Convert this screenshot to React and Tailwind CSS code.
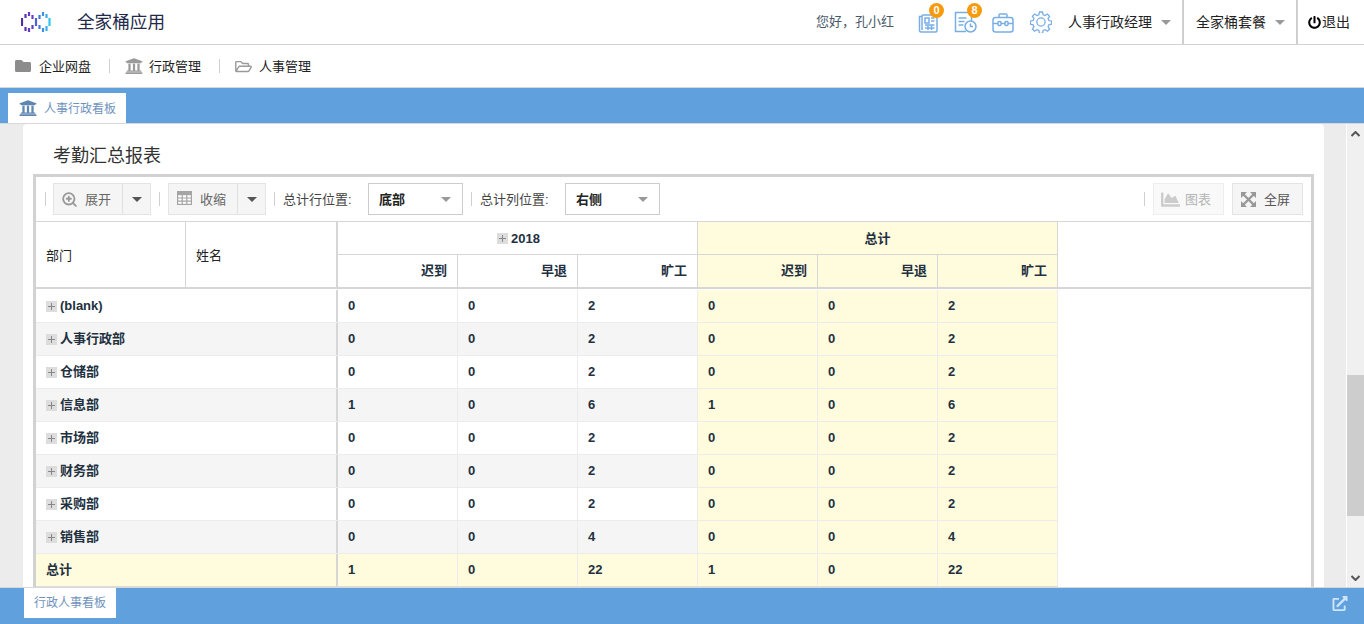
import React from "react";
import { FaFolder, FaUniversity, FaRegFolderOpen, FaChartArea, FaPowerOff, FaExternalLinkAlt } from "react-icons/fa";
import { ZoomIn } from "lucide-react";

const Caret = ({ className = "" }) => (
  <span className={`inline-block w-0 h-0 border-l-[5px] border-r-[5px] border-t-[5px] border-l-transparent border-r-transparent ${className}`} />
);

const Logo = () => {
  const bars = [
    [1, 6, 14, "#4d2fa8"], [4.5, 2, 6, "#5a30b8"], [4.5, 15, 19, "#5a30b8"], [8, 0, 4, "#6438c0"], [8, 16, 20, "#6438c0"],
    [11.5, 3, 7, "#5e40c4"], [11.5, 13, 17, "#5e40c4"], [15, 6, 14, "#4f60d0"],
    [18.5, 3, 7, "#4478d8"], [18.5, 13, 17, "#4478d8"], [22, 0, 4, "#3f92e2"], [22, 16, 20, "#3f92e2"],
    [25.5, 2, 6, "#38aeea"], [25.5, 14, 19, "#38aeea"], [28.5, 6, 14, "#30c4f0"],
  ];
  return (
    <svg width="30" height="20" viewBox="0 0 30 20" className="ml-[21px]">
      {bars.map(([x, a, b, c], i) => (
        <line key={i} x1={x} x2={x} y1={a} y2={b} stroke={c} strokeWidth="2.2" />
      ))}
    </svg>
  );
};

const Badge = ({ n, className }) => (
  <span className={`absolute flex items-center justify-center w-[15px] h-[15px] rounded-full bg-[#f79a0e] text-white text-[11px] font-bold leading-none ${className}`}>{n}</span>
);

const Stroke = "#78aee6";

const HeaderIcons = () => (
  <div className="flex items-center h-full">
    <div className="relative w-[22px] h-[22px]">
      <svg width="22" height="22" viewBox="0 0 22 22" fill="none" stroke={Stroke} strokeWidth="1.5">
        <path d="M4 5.5H1.5v14a1.5 1.5 0 0 0 1.5 1.5h14.5a1.5 1.5 0 0 0 1.5-1.5V4H5a1 1 0 0 0-1 1v14" />
        <path d="M7 7h4v5H7zM13 7h3.5M13 10h3.5M7 14h9.5M7 17h9.5M10 14v5M13.5 14v5" />
      </svg>
      <Badge n="0" className="top-[-8px] left-[11px]" />
    </div>
    <div className="relative w-[24px] h-[22px] ml-[14px]">
      <svg width="24" height="22" viewBox="0 0 24 22" fill="none" stroke={Stroke} strokeWidth="1.5">
        <path d="M12 20.5H1.5V1.5h13l3 3V10" />
        <path d="M4.5 7h8M4.5 10.5h6M4.5 14h5" />
        <circle cx="16.5" cy="15.5" r="5.5" fill="#fff" />
        <path d="M16.5 12.5v3h2.5" />
      </svg>
      <Badge n="8" className="top-[-8px] left-[13px]" />
    </div>
    <svg width="22" height="20" viewBox="0 0 22 20" fill="none" stroke={Stroke} strokeWidth="1.5" className="ml-[14px] mt-[2px]">
      <rect x="1" y="4.5" width="20" height="14.5" rx="2.5" />
      <path d="M7 4.5V2a1 1 0 0 1 1-1h6a1 1 0 0 1 1 1v2.5M1 10.5h5M16 10.5h5M9 10.5h4" />
      <rect x="6" y="8.5" width="3" height="4" rx="1" />
      <rect x="13" y="8.5" width="3" height="4" rx="1" />
    </svg>
    <svg width="22" height="22" viewBox="0 0 24 24" fill="none" stroke={Stroke} strokeWidth="1.4" className="ml-[16px]">
      <path d="M10.3 1.5h3.4l.6 3 2.1.9 2.6-1.7 2.4 2.4-1.7 2.6.9 2.1 3 .6v3.4l-3 .6-.9 2.1 1.7 2.6-2.4 2.4-2.6-1.7-2.1.9-.6 3h-3.4l-.6-3-2.1-.9-2.6 1.7-2.4-2.4 1.7-2.6-.9-2.1-3-.6v-3.4l3-.6.9-2.1-1.7-2.6 2.4-2.4 2.6 1.7 2.1-.9z" transform="translate(0 -.4)" />
      <circle cx="12" cy="12" r="4.5" />
    </svg>
  </div>
);

const Top = () => (
  <div className="h-[45px] shrink-0 flex items-center bg-white border-b border-[#d2d2d2]">
    <Logo />
    <span className="ml-[26px] text-[17.6px] text-[#222a4a]">全家桶应用</span>
    <div className="ml-auto flex items-stretch h-full">
      <span className="self-center text-[13px] text-[#4a5a6a] mr-[24px] whitespace-nowrap">您好，孔小红</span>
      <HeaderIcons />
      <div className="flex items-center ml-[16px] w-[114px] text-[14px] text-[#222]">
        人事行政经理
        <Caret className="ml-[9px] border-t-[#999]" />
      </div>
      <div className="flex items-center w-[114px] pl-[12px] border-l-2 border-[#cfcfcf] text-[14px] text-[#222]">
        全家桶套餐
        <Caret className="ml-[9px] border-t-[#999]" />
      </div>
      <div className="flex items-center w-[68px] pl-[10px] border-l-2 border-[#cfcfcf] text-[14px] text-[#222]">
        <FaPowerOff className="w-[13px] h-[13px] mr-[1px] text-black" />
        退出
      </div>
    </div>
  </div>
);

const Nav = () => (
  <div className="h-[42px] shrink-0 flex items-center bg-white pl-[15px] text-[13px] text-[#222]">
    <FaFolder className="w-[16px] h-[16px] text-[#8c8c8c] mr-[8px]" />
    <span className="pt-[1px]">企业网盘</span>
    <span className="w-px h-[14px] bg-[#d0d0d0] ml-[18px] mr-[15px]" />
    <FaUniversity className="w-[18px] h-[18px] text-[#9a9a9a] mr-[6px]" />
    <span className="pt-[1px]">行政管理</span>
    <span className="w-px h-[14px] bg-[#d0d0d0] ml-[18px] mr-[15px]" />
    <FaRegFolderOpen className="w-[17px] h-[15px] text-[#9a9a9a] mr-[7px]" />
    <span className="pt-[1px]">人事管理</span>
  </div>
);

const TabBar = () => (
  <div className="h-[37px] shrink-0 flex items-end bg-[#5fa0dd] border-y border-[#d8d8d8] pl-[8px]">
    <div className="w-[118px] h-[30px] bg-white flex items-center pl-[11px] text-[12px] text-[#6f93bd]">
      <FaUniversity className="w-[18px] h-[18px] text-[#5d86b0] mr-[7px]" />
      <span className="pt-[2px]">人事行政看板</span>
    </div>
  </div>
);

const Sep = ({ cls = "" }) => <span className={`w-px h-[14px] bg-[#cfcfcf] shrink-0 ${cls}`} />;

const SplitBtn = ({ icon, label, gap }) => (
  <div className="flex h-[32px] w-[98px] shrink-0 bg-[#f5f5f5] border border-[#e4e4e4] text-[13px] text-[#666]">
    <div className="w-[69px] flex items-center pl-[7px] border-r border-[#e0e0e0]">
      {icon}
      <span className="pt-[1px]" style={{ marginLeft: gap }}>{label}</span>
    </div>
    <div className="flex-1 flex items-center justify-center">
      <Caret className="border-t-[#555]" />
    </div>
  </div>
);

const TableIcon = () => (
  <svg width="15" height="14" viewBox="0 0 15 14" className="ml-[1px] mb-[2px]" fill="none" stroke="#a5a5a5" strokeWidth="1.2">
    <rect x="0.6" y="0.6" width="13.8" height="12.8" fill="#fff" />
    <rect x="0.6" y="0.6" width="13.8" height="3" fill="#a5a5a5" />
    <path d="M5.2 3.5v10M9.8 3.5v10M0.6 7h13.8M0.6 10.2h13.8" />
  </svg>
);

const ExpandIcon = () => (
  <svg width="15" height="15" viewBox="0 0 15 15" className="mr-[8px]" fill="#999">
    <path d="M0 0h6L0 6zM15 0v6L9 0zM0 15V9l6 6zM15 15H9l6-6z" />
    <path d="M2.5 2.5l10 10M12.5 2.5l-10 10" stroke="#999" strokeWidth="2.4" />
  </svg>
);

const Select = ({ value }) => (
  <div className="flex items-center justify-between h-[32px] w-[95px] shrink-0 bg-white border border-[#cccccc] pl-[10px] pr-[11px] text-[13px] font-bold text-[#222]">
    <span className="pt-[1px]">{value}</span>
    <Caret className="border-t-[#999]" />
  </div>
);

const Toolbar = () => (
  <div className="h-[45px] flex items-center border-b border-[#d6d6d6] text-[13px] text-[#444] whitespace-nowrap">
    <Sep cls="ml-[9px] mr-[7px]" />
    <SplitBtn icon={<ZoomIn className="w-[17px] h-[17px] text-[#999]" strokeWidth={2.6} />} label="展开" gap={7} />
    <Sep cls="ml-[8px] mr-[8px]" />
    <SplitBtn icon={<TableIcon />} label="收缩" gap={8} />
    <Sep cls="ml-[8px] mr-[8px]" />
    <span className="w-[85px] pt-[1px]">总计行位置:</span>
    <Select value="底部" />
    <Sep cls="ml-[8px] mr-[8px]" />
    <span className="w-[85px] pt-[1px]">总计列位置:</span>
    <Select value="右侧" />
    <Sep cls="ml-auto mr-[8px]" />
    <div className="flex items-center h-[32px] w-[71px] bg-[#f9f9f9] border border-[#eeeeee] pl-[7px] text-[#b5b5b5]">
      <FaChartArea className="w-[19px] h-[19px] text-[#cccccc] mr-[5px]" />
      <span className="pt-[1px]">图表</span>
    </div>
    <div className="flex items-center h-[32px] w-[71px] ml-[8px] mr-[8px] bg-[#f5f5f5] border border-[#e4e4e4] pl-[8px] text-[#555]">
      <ExpandIcon />
      <span className="pt-[1px]">全屏</span>
    </div>
  </div>
);

const cols = ["迟到", "早退", "旷工", "迟到", "早退", "旷工"];
const rows = [
  ["(blank)", 0, 0, 2],
  ["人事行政部", 0, 0, 2],
  ["仓储部", 0, 0, 2],
  ["信息部", 1, 0, 6],
  ["市场部", 0, 0, 2],
  ["财务部", 0, 0, 2],
  ["采购部", 0, 0, 2],
  ["销售部", 0, 0, 4],
];

const Plus = ({ cls = "" }) => (
  <span className={`relative inline-block w-[11px] h-[11px] bg-[#dddddd] mr-[3px] shrink-0 ${cls}`}>
    <span className="absolute left-[2px] right-[2px] top-[5px] h-px bg-[#888]" />
    <span className="absolute top-[2px] bottom-[2px] left-[5px] w-px bg-[#888]" />
  </span>
);

const Header = () => (
  <div className="flex h-[67px] border-b-2 border-[#d6d6d6] text-[13px] font-bold text-[#22303f]">
    <div className="w-[150px] flex items-center pl-[10px] pt-[2px] border-r border-[#d6d6d6] font-normal text-[#222]">部门</div>
    <div className="w-[152px] flex items-center pl-[10px] pt-[2px] border-r-2 border-[#d6d6d6] font-normal text-[#222]">姓名</div>
    <div className="w-[720px] flex flex-col">
      <div className="h-[33px] flex border-b border-[#d6d6d6]">
        <div className="w-[360px] flex items-center justify-center pt-[1px] border-r border-[#d6d6d6]">
          <Plus cls="ml-[2px]" />
          2018
        </div>
        <div className="w-[360px] flex items-center justify-center pt-[1px] bg-[#fffbdd] border-r border-[#d6d6d6]">总计</div>
      </div>
      <div className="flex-1 flex">
        {cols.map((c, i) => (
          <div key={i} className={`w-[120px] flex items-center justify-end pr-[10px] border-r border-[#d6d6d6] ${i > 2 ? "bg-[#fffbdd]" : ""}`}>
            {c}
          </div>
        ))}
      </div>
    </div>
  </div>
);

const Row = ({ name, vals, even, first }) => (
  <div className={`flex w-[1022px] text-[13px] font-bold text-[#22303f] border-b border-[#ececec] ${first ? "h-[34px] pt-[1px]" : "h-[33px]"}`}>
    <div className={`w-[300px] flex items-center pl-[10px] ${even ? "bg-[#f5f5f5]" : ""}`}>
      <Plus />
      {name}
    </div>
    <div className="w-[2px] bg-[#d6d6d6]" />
    {[...vals, ...vals].map((v, i) => (
      <div
        key={i}
        className={`w-[120px] flex items-center pl-[10px] border-r border-[#ececec] ${i > 2 ? "bg-[#fffbdd]" : even ? "bg-[#f5f5f5]" : ""}`}
      >
        {v}
      </div>
    ))}
  </div>
);

const Total = () => (
  <div className="flex w-[1022px] h-[33px] text-[13px] font-bold text-[#22303f] border-b border-[#dcdcdc]">
    <div className="w-[300px] flex items-center pl-[10px] bg-[#fffbdd]">总计</div>
    <div className="w-[2px] bg-[#d6d6d6]" />
    {[1, 0, 22, 1, 0, 22].map((v, i) => (
      <div key={i} className="w-[120px] flex items-center pl-[10px] bg-[#fffbdd] border-r border-[#ececec]">
        {v}
      </div>
    ))}
  </div>
);

const Scrollbar = () => (
  <div className="w-[18px] shrink-0 flex flex-col items-center bg-[#f0f0f0] border-l border-white">
    <svg width="9" height="6" viewBox="0 0 9 6" className="mt-[7px] shrink-0">
      <path d="M0.5 5L4.5 1L8.5 5" fill="none" stroke="#555" strokeWidth="2" />
    </svg>
    <div className="h-[238px] shrink-0" />
    <div className="w-full h-[141px] shrink-0 bg-[#cdcdcd]" />
    <div className="flex-1" />
    <svg width="9" height="6" viewBox="0 0 9 6" className="mb-[6px] shrink-0">
      <path d="M0.5 1L4.5 5L8.5 1" fill="none" stroke="#555" strokeWidth="2" />
    </svg>
  </div>
);

const Main = () => (
  <div className="flex-1 min-h-0 flex bg-[#ececec] overflow-hidden">
    <div className="ml-[23px] w-[1301px] shrink-0 bg-white rounded-tr-[4px] rounded-tl-[4px] overflow-hidden">
      <div className="h-[50px] pl-[30px] pt-[19px] text-[18px] leading-[26px] text-[#333]">考勤汇总报表</div>
      <div className="ml-[10px] w-[1281px] h-[420px] border-[3px] border-b-0 border-[#d2d2d2]">
        <Toolbar />
        <Header />
        {rows.map(([n, a, b, c], i) => (
          <Row key={n} name={n} vals={[a, b, c]} even={i % 2 === 1} first={i === 0} />
        ))}
        <Total />
      </div>
    </div>
    <div className="flex-1" />
    <Scrollbar />
  </div>
);

const Bottom = () => (
  <div className="h-[37px] shrink-0 flex items-start justify-between bg-[#5fa0dd] border-t border-[#d8d8d8] pl-[24px] pr-[16px]">
    <div className="w-[92px] h-[30px] bg-white flex items-center justify-center text-[12px] text-[#6f93bd]">行政人事看板</div>
    <FaExternalLinkAlt className="w-[16px] h-[15px] mt-[8px] text-[#cfe5fa]" />
  </div>
);

export default function App() {
  return (
    <div className="w-[1364px] h-[624px] flex flex-col overflow-hidden bg-white font-['Liberation_Sans','Noto_Sans_CJK_SC',sans-serif]">
      <Top />
      <Nav />
      <TabBar />
      <Main />
      <Bottom />
    </div>
  );
}
